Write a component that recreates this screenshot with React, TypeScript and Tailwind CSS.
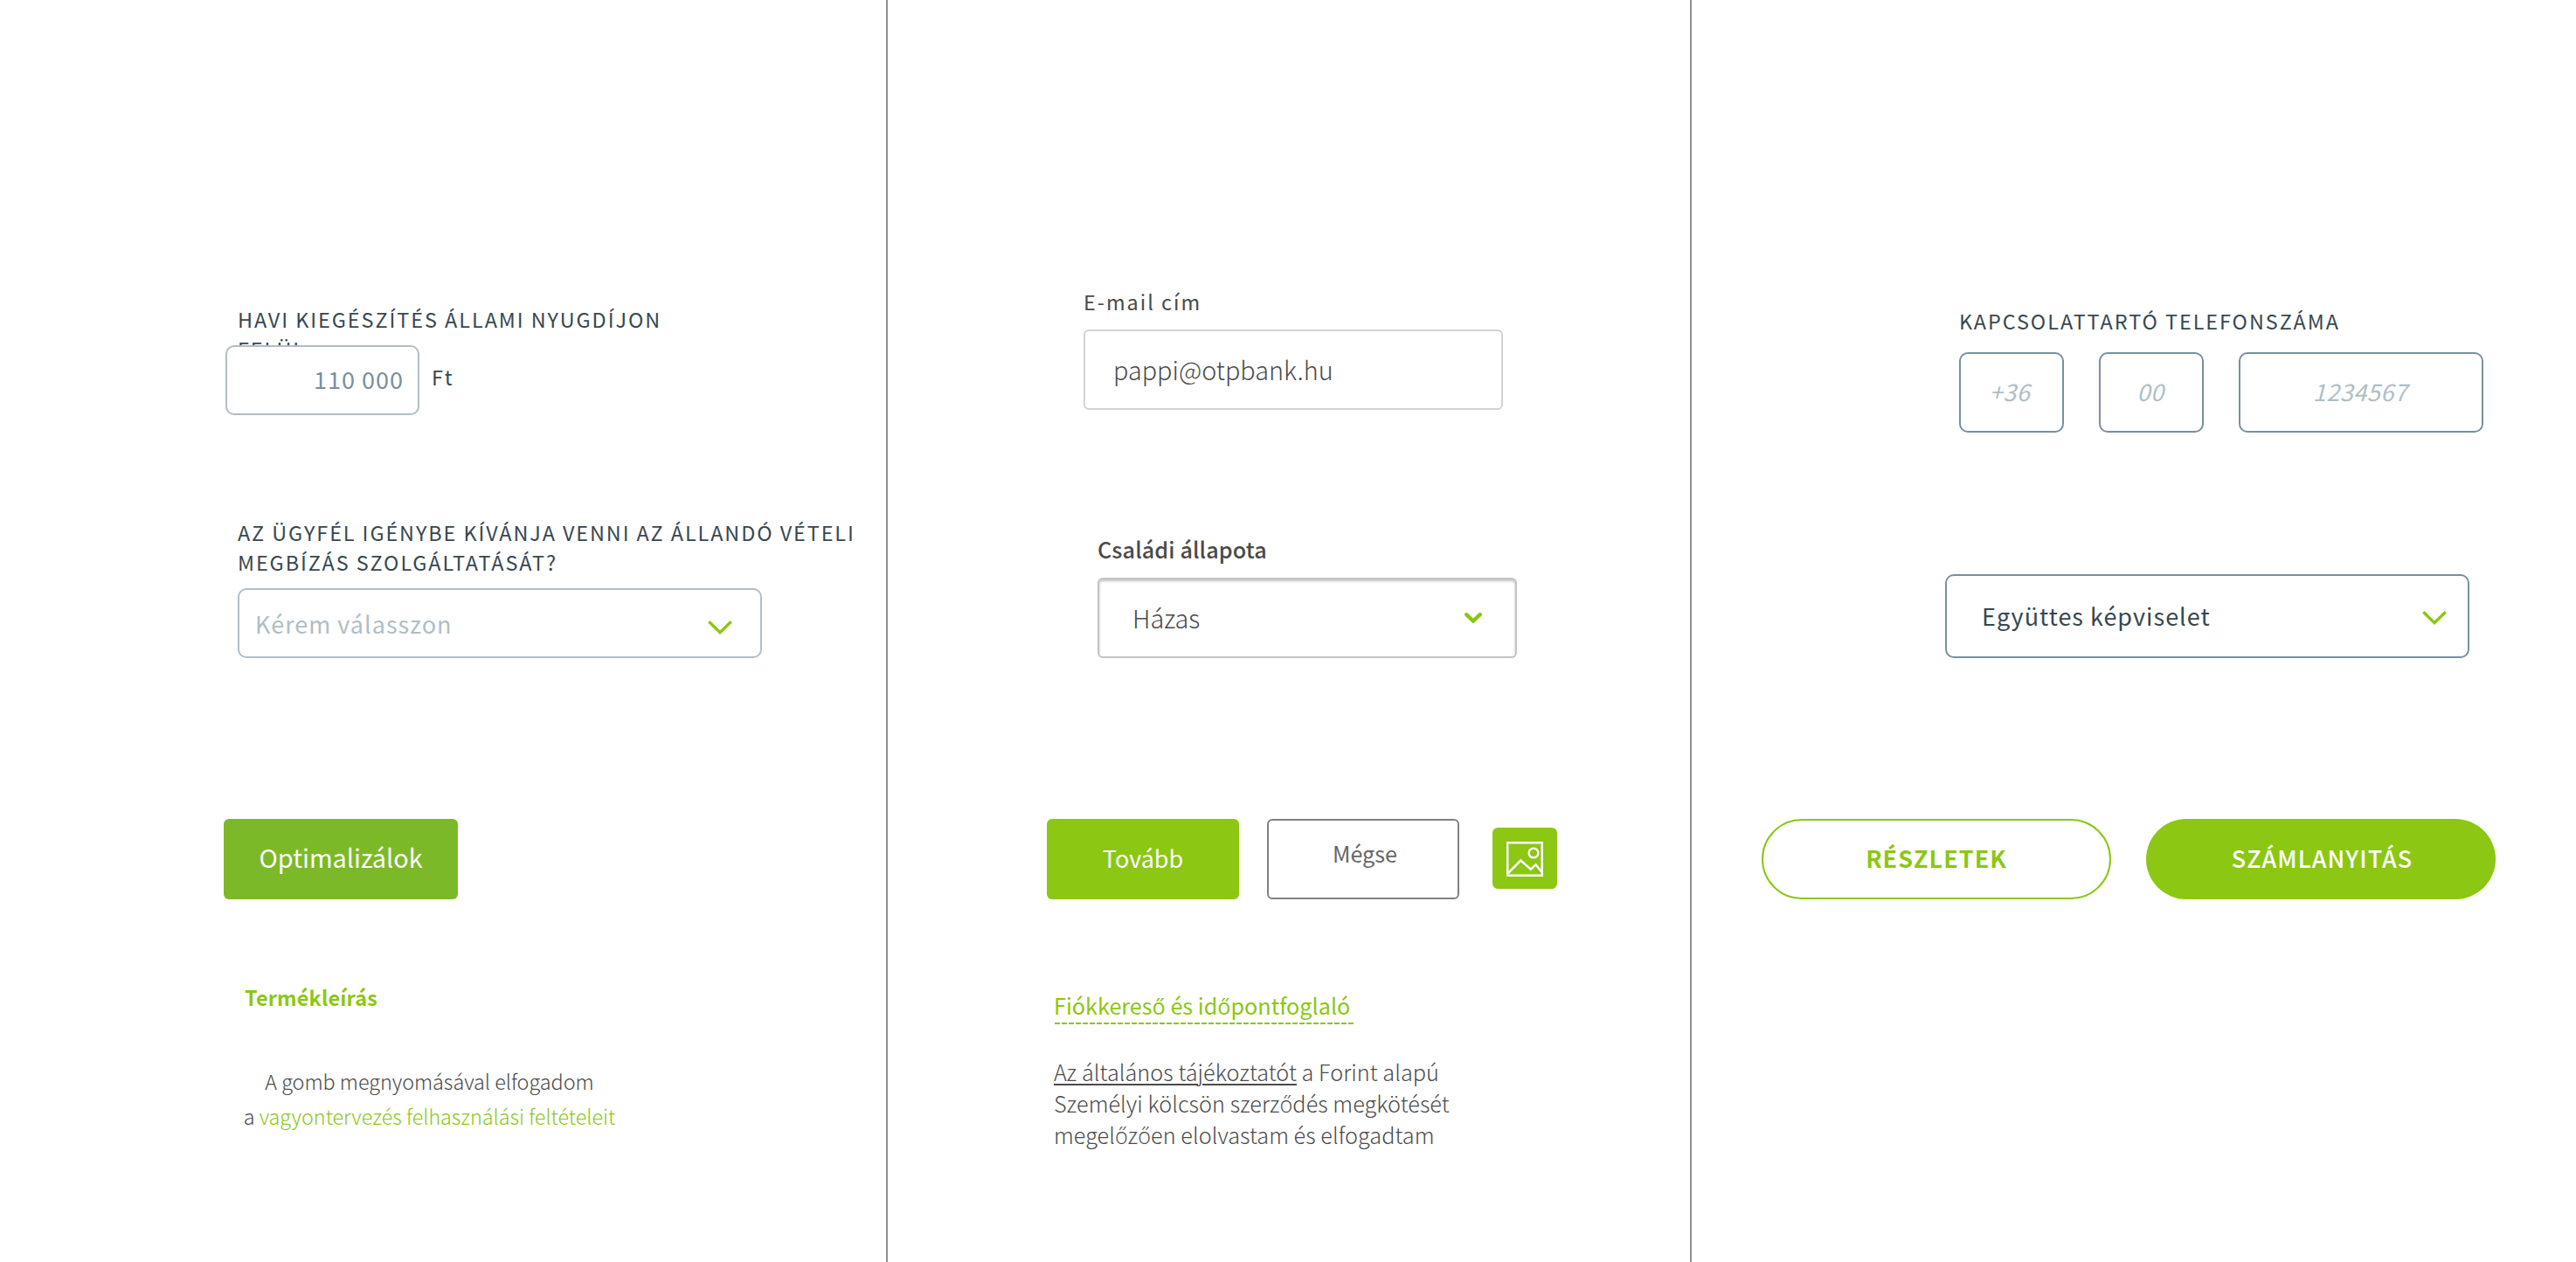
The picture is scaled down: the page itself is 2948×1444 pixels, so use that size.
import type { ReactNode } from 'react'
import clsx from 'clsx'

type ChildrenProps = {
  children: ReactNode
  className?: string
}

function Chevron({ className }: { className?: string }) {
  return (
    <svg width="28" height="16" viewBox="0 0 28 16" fill="none" className={className}>
      <path d="M1.3 1.2 14 13.6 26.7 1.2" stroke="#8bc713" strokeWidth="3.4" />
    </svg>
  )
}

function BoldChevron() {
  return (
    <svg width="20" height="12" viewBox="0 0 20 12" fill="none">
      <path d="M2.2 2.2 10 9.6 17.8 2.2" stroke="#8bc713" strokeWidth="4.4" strokeLinecap="round" />
    </svg>
  )
}

function ImageIcon() {
  return (
    <svg width="42" height="40" viewBox="0 0 42 40" fill="none" stroke="#fff" strokeWidth="2.5">
      <rect x="1.25" y="1.25" width="39.5" height="37.5" />
      <circle cx="31" cy="13" r="5.3" />
      <path d="M1.5 36.5 16.3 21.5 27.8 31.6 33.6 26.3 40.5 35" />
    </svg>
  )
}

function Label({ children, className }: ChildrenProps) {
  return (
    <p className={clsx('text-[23.4px] leading-[34px] whitespace-nowrap', className)}>
      {children}
    </p>
  )
}

function PhoneBox({ children, className }: ChildrenProps) {
  return (
    <div
      className={clsx(
        'h-[92px] flex items-center justify-center pb-px border-2 border-[#78909c] rounded-[10px] text-[27px] tracking-[0.5px] italic text-[#b0bec5]',
        className
      )}
    >
      {children}
    </div>
  )
}

function PensionColumn() {
  return (
    <section className="w-[1016px] border-r-2 border-[#909090] pt-[348px] flex flex-col items-start">
      <Label className="ml-[272px] tracking-[1.95px] text-[#37474f]">
        HAVI KIEGÉSZÍTÉS ÁLLAMI NYUGDÍJON
        <br />
        FELÜL
      </Label>
      <div className="relative -mt-[21px] ml-[258px] flex items-start">
        <div className="w-[222px] h-20 bg-white border-2 border-[#b0bec5] rounded-[10px] flex items-center justify-end pr-4 pb-px text-[27px] tracking-[1px] text-[#78909c]">
          110 000
        </div>
        <Label className="mt-[19px] ml-[14px] tracking-[2px] text-[#37474f]">Ft</Label>
      </div>

      <Label className="mt-[117px] ml-[272px] tracking-[1.92px] text-[#37474f]">
        AZ ÜGYFÉL IGÉNYBE KÍVÁNJA VENNI AZ ÁLLANDÓ VÉTELI
        <br />
        MEGBÍZÁS SZOLGÁLTATÁSÁT?
      </Label>
      <div className="mt-[13px] ml-[272px] w-[600px] h-20 border-2 border-[#b0bec5] rounded-[10px] pl-[18px] pr-8 flex items-center justify-between">
        <span className="pt-[2px] text-[27px] tracking-[1px] text-[#b0bec5]">Kérem válasszon</span>
        <Chevron className="mt-[10px]" />
      </div>

      <button className="mt-[184px] ml-[256px] w-[268px] h-[92px] pb-1 rounded-md bg-[#7cb928] text-white text-[28.8px]">
        Optimalizálok
      </button>

      <a className="mt-[95px] ml-[280px] text-[23.4px] leading-[34px] tracking-[0.2px] font-bold text-[#8bc713]">
        Termékleírás
      </a>
      <p className="mt-[59px] ml-[278px] w-[427px] text-center text-[23.4px] leading-10 font-light text-[#4a4a4a] tracking-[-0.03px] whitespace-nowrap">
        A gomb megnyomásával elfogadom
        <br />a <a className="text-[#8bc713]">vagyontervezés felhasználási feltételeit</a>
      </p>
    </section>
  )
}

function LoanColumn() {
  return (
    <section className="w-[920px] border-r-2 border-[#909090] pt-[328px] flex flex-col items-start">
      <Label className="ml-[224px] tracking-[2px] text-[#4a4a4a]">E-mail cím</Label>
      <div className="mt-[15px] ml-[224px] w-[480px] h-[92px] border-2 border-[#d2d2d2] rounded-md pl-8 flex items-center text-[28.8px] font-light text-[#4a4a4a]">
        pappi@otpbank.hu
      </div>

      <p className="mt-[142px] ml-[240px] text-[25.2px] leading-[34px] tracking-[0.1px] font-medium text-[#4a4a4a]">
        Családi állapota
      </p>
      <div className="mt-4 ml-[240px] w-[480px] h-[92px] border-2 border-[#c3c3c3] rounded-md shadow-[inset_0_2px_3px_rgba(0,0,0,0.25)] pl-[38px] pr-[38px] flex items-center justify-between">
        <span className="text-[28.8px] font-light text-[#4a4a4a]">Házas</span>
        <BoldChevron />
      </div>

      <div className="mt-[184px] ml-[182px] flex items-start">
        <button className="w-[220px] h-[92px] pb-[2px] rounded-md bg-[#8bc713] text-white text-[27px]">
          Tovább
        </button>
        <button className="ml-8 w-[220px] h-[92px] pb-[13px] pl-1 rounded-md border-2 border-[#808080] text-[#666] text-[25.2px]">
          Mégse
        </button>
        <button className="mt-[10px] ml-[38px] w-[74px] h-[70px] pt-px flex items-center justify-center rounded-md bg-[#8bc713]">
          <ImageIcon />
        </button>
      </div>

      <a className="mt-[104px] ml-[191px] w-[342px] text-[#8bc713]">
        <span className="block h-[37px] -ml-px text-[25.2px] leading-[34px] whitespace-nowrap">
          Fiókkereső és időpontfoglaló
        </span>
        <span className="block h-0.5 bg-[repeating-linear-gradient(90deg,#8bc713_0px,#8bc713_6px,transparent_6px,transparent_8px)]" />
      </a>
      <p className="mt-9 ml-[190px] text-[25.2px] leading-9 tracking-[0.06px] font-light text-[#4a4a4a] whitespace-nowrap">
        <a className="underline decoration-2 underline-offset-[3px]">Az általános tájékoztatót</a> a
        Forint alapú
        <br />
        Személyi kölcsön szerződés megkötését
        <br />
        megelőzően elolvastam és elfogadtam
      </p>
    </section>
  )
}

function AccountColumn() {
  return (
    <section className="flex-1 pt-[350px] flex flex-col items-start">
      <Label className="ml-[306px] tracking-[1.95px] text-[#37474f]">
        KAPCSOLATTARTÓ TELEFONSZÁMA
      </Label>
      <div className="mt-[19px] ml-[306px] flex gap-10">
        <PhoneBox className="w-[120px] pr-1">+36</PhoneBox>
        <PhoneBox className="w-[120px] pr-[2px]">00</PhoneBox>
        <PhoneBox className="w-[280px] pr-[2px]">1234567</PhoneBox>
      </div>

      <div className="mt-[162px] ml-[290px] w-[600px] h-24 border-2 border-[#78909c] rounded-[10px] pl-10 pr-6 flex items-center justify-between">
        <span className="pt-px text-[27px] tracking-[1px] text-[#37474f]">Együttes képviselet</span>
        <Chevron className="mt-1" />
      </div>

      <div className="mt-[184px] ml-20 flex gap-10 text-[27px] tracking-[1px]">
        <button className="w-[400px] h-[92px] pb-[2px] rounded-full border-2 border-[#8bc713] font-bold text-[#8bc713]">
          RÉSZLETEK
        </button>
        <button className="w-[400px] h-[92px] pb-[2px] pl-[3px] rounded-full bg-[#8bc713] font-medium text-white">
          SZÁMLANYITÁS
        </button>
      </div>
    </section>
  )
}

export default function App() {
  return (
    <main className="w-[2948px] h-[1444px] overflow-hidden flex bg-white font-['Noto_Sans_CJK_JP','Open_Sans','Noto_Sans',sans-serif]">
      <PensionColumn />
      <LoanColumn />
      <AccountColumn />
    </main>
  )
}
